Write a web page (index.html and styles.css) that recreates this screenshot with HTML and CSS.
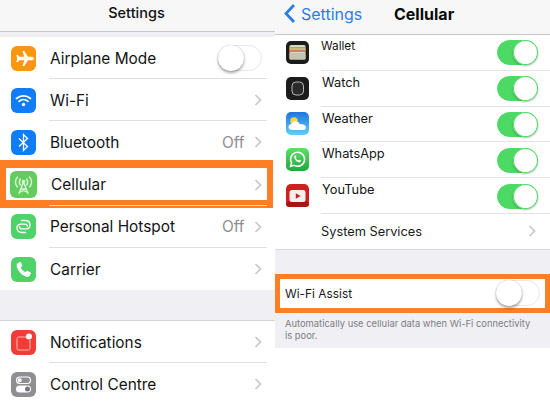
FILE: index.html
```html
<!DOCTYPE html>
<html lang="en">
<head>
<meta charset="utf-8">
<title>Settings</title>
<link rel="stylesheet" href="styles.css">
</head>
<body>
<main class="screens">
  <section class="panel settings">
    <header class="nav nav-left"><h1 class="nav-title">Settings</h1></header>
    <div class="list">
      <div class="row">
        <svg class="icon" viewBox="0 0 25 25"><rect width="25" height="25" rx="6" fill="#fc9512"/><path d="M11.500 5h1.800l3.700 5.700h3.500c1.300 0 2.500.8 2.500 1.800s-1.200 1.800-2.500 1.800H17L13.300 20h-1.800l1.800-5.700H8.500L6.800 16H5.300l.9-3.500-.9-3.500h1.500l1.700 1.700h4.800z" fill="#fff"/></svg>
        <span class="label">Airplane Mode</span>
        <span class="toggle"></span>
      </div>
      <div class="row">
        <svg class="icon" viewBox="0 0 25 25"><rect width="25" height="25" rx="6" fill="#107cf5"/><g fill="none" stroke="#fff" stroke-width="1.700" stroke-linecap="round"><path d="M5.500 10.500c4-3.600 10-3.600 14 0"/><path d="M8 13.300c2.600-2.200 6.400-2.200 9 0"/></g><circle cx="12.500" cy="16.500" r="1.700" fill="#fff"/></svg>
        <span class="label">Wi-Fi</span>
        <svg class="chev" viewBox="0 0 8 12"><path d="M1.500 1l5 5-5 5"/></svg>
      </div>
      <div class="row">
        <svg class="icon" viewBox="0 0 25 25"><rect width="25" height="25" rx="6" fill="#107cf5"/><path d="M8 8.500l8.500 8-4 4V4.500l4 4L8 16.500" fill="none" stroke="#fff" stroke-width="1.300"/></svg>
        <span class="label">Bluetooth</span>
        <span class="value">Off</span>
        <svg class="chev" viewBox="0 0 8 12"><path d="M1.500 1l5 5-5 5"/></svg>
      </div>
      <div class="row row-marked">
        <svg class="icon icon-large" viewBox="0 0 27 27"><rect width="27" height="27" rx="6" fill="#62cd5c"/><g fill="none" stroke="#d9f5d6" stroke-width="1.400" stroke-linecap="round"><path d="M7.500 6c-2.500 3-2.500 7 0 10M10.300 8c-1.300 2-1.300 4 0 6M19.500 6c2.500 3 2.500 7 0 10M16.700 8c1.300 2 1.300 4 0 6"/><path d="M13.500 11L9 22.500M13.500 11L18 22.500M11 18h5M10 21l6-3M17 21l-6-3"/></g><circle cx="13.500" cy="10.500" r="1.700" fill="#e6f9e4"/></svg>
        <span class="label">Cellular</span>
        <svg class="chev" viewBox="0 0 8 12"><path d="M1.500 1l5 5-5 5"/></svg>
        <span class="mark mark-cellular"></span>
      </div>
      <div class="row">
        <svg class="icon" viewBox="0 0 25 25"><rect width="25" height="25" rx="6" fill="#4fd268"/><g fill="none" stroke="#fff" stroke-width="1.300" stroke-linecap="round"><path d="M10.500 6.500h3.500c3 0 5 1.800 5 4.400 0 2.500-1.800 4-4.200 4h-3.600c-1.500 0-2.600-.9-2.600-2.200"/><path d="M14.500 18.500H11c-3 0-5-1.800-5-4.400 0-2.500 1.800-4 4.200-4h3.600c1.500 0 2.600.9 2.600 2.200"/></g></svg>
        <span class="label">Personal Hotspot</span>
        <span class="value">Off</span>
        <svg class="chev" viewBox="0 0 8 12"><path d="M1.500 1l5 5-5 5"/></svg>
      </div>
      <div class="row">
        <svg class="icon" viewBox="0 0 25 25"><rect width="25" height="25" rx="6" fill="#4fd268"/><path d="M6.500 6.200l2.300-1.300c.5-.2.900 0 1.100.4l1.300 3c.2.400 0 .8-.3 1L9.700 10.300c.8 2 2.600 4 4.700 5l1.100-1.300c.3-.3.700-.4 1.100-.2l2.900 1.600c.4.200.5.700.3 1.100L18.500 19c-.7.900-2 1.200-3.300.7C10.500 18 7 14 5.800 9.500c-.3-1.300 0-2.600.7-3.300z" fill="#fff"/></svg>
        <span class="label">Carrier</span>
        <svg class="chev" viewBox="0 0 8 12"><path d="M1.500 1l5 5-5 5"/></svg>
      </div>
    </div>
    <div class="spacer-left"></div>
    <div class="list">
      <div class="row">
        <svg class="icon" viewBox="0 0 25 25"><rect width="25" height="25" rx="6" fill="#f23d37"/><path d="M17 7H7.500C6.700 7 6 7.700 6 8.500v10c0 .8.700 1.500 1.500 1.500h10c.8 0 1.500-.7 1.500-1.500V10" fill="none" stroke="#fbb" stroke-width="1"/><circle cx="18" cy="6.500" r="3" fill="#fff"/></svg>
        <span class="label">Notifications</span>
        <svg class="chev" viewBox="0 0 8 12"><path d="M1.500 1l5 5-5 5"/></svg>
      </div>
      <div class="row">
        <svg class="icon" viewBox="0 0 25 25"><rect width="25" height="25" rx="6" fill="#8e8e93"/><rect x="5.500" y="5" width="14" height="6.500" rx="3.250" fill="none" stroke="#fff" stroke-width="1.200"/><circle cx="8.700" cy="8.200" r="2" fill="#fff"/><rect x="5" y="13.500" width="15" height="7" rx="3.500" fill="#fff"/><circle cx="16.500" cy="17" r="2.500" fill="#77777c"/></svg>
        <span class="label">Control Centre</span>
        <svg class="chev" viewBox="0 0 8 12"><path d="M1.500 1l5 5-5 5"/></svg>
      </div>
    </div>
  </section>

  <section class="panel cellular">
    <header class="nav nav-right">
      <a class="back">
        <svg class="back-chev" viewBox="0 0 13 21"><path d="M11 2L3 10.500 11 19"/></svg>
        <span>Settings</span>
      </a>
      <h2 class="nav-bold">Cellular</h2>
    </header>
    <div class="apps">
      <div class="app">
        <svg class="app-icon" viewBox="0 0 23 23"><rect width="23" height="23" rx="5" fill="#1c1c1c"/><rect x="3.500" y="4" width="16" height="14.500" rx="1.500" fill="#d9d6c4"/><rect x="3.500" y="6" width="16" height="1.600" fill="#8fb26e"/><rect x="3.500" y="7.600" width="16" height="1.600" fill="#e3b75e"/><rect x="3.500" y="9.200" width="16" height="1.600" fill="#d9694f"/><rect x="3.500" y="12" width="16" height="6.500" rx="1" fill="#c6c3b2"/></svg>
        <span class="app-label app-label-small">Wallet</span>
        <span class="toggle toggle-on"></span>
      </div>
      <div class="app">
        <svg class="app-icon" viewBox="0 0 23 23"><rect width="23" height="23" rx="5" fill="#1c1c1c"/><rect x="6" y="5" width="11.500" height="13" rx="4" fill="#2a2a2a" stroke="#b5b5b5" stroke-width="1"/></svg>
        <span class="app-label">Watch</span>
        <span class="toggle toggle-on"></span>
      </div>
      <div class="app">
        <svg class="app-icon" viewBox="0 0 23 23"><defs><linearGradient id="sky" x1="0" y1="0" x2="0" y2="1"><stop offset="0" stop-color="#1d74e0"/><stop offset="1" stop-color="#5fd0f6"/></linearGradient></defs><rect width="23" height="23" rx="5" fill="url(#sky)"/><circle cx="8" cy="9" r="3.700" fill="#f7d548"/><path d="M6 18c-2 0-3.500-1.300-3.500-3s1.400-2.900 3-2.900C6.300 10 8.500 9 10.500 9.500c1.700.4 3 1.500 3.500 3 .7-.4 1.600-.5 2.500-.3 1.800.4 3.500 1.700 3.500 3.200 0 1.700-1.300 2.600-3 2.600z" fill="#fff"/></svg>
        <span class="app-label">Weather</span>
        <span class="toggle toggle-on"></span>
      </div>
      <div class="app">
        <svg class="app-icon" viewBox="0 0 23 23"><defs><linearGradient id="wa" x1="0" y1="0" x2="0" y2="1"><stop offset="0" stop-color="#5fe06d"/><stop offset="1" stop-color="#1fa83a"/></linearGradient></defs><rect width="23" height="23" rx="5" fill="url(#wa)"/><path d="M4.500 18.500l1.100-3.700a7 7 0 1 1 2.700 2.600z" fill="none" stroke="#fff" stroke-width="1.500"/><path d="M9 7.500c-.8.600-1 1.700-.6 2.800.7 1.900 2.300 3.400 4.200 4 1.100.3 2-.1 2.500-1 .2-.4 0-.7-.3-.9l-1.200-.6c-.3-.1-.5 0-.7.200l-.5.6c-1.100-.4-2.100-1.400-2.600-2.500l.5-.6c.1-.2.200-.4 0-.7l-.6-1.200c-.1-.3-.4-.3-.7-.1z" fill="#fff"/></svg>
        <span class="app-label">WhatsApp</span>
        <span class="toggle toggle-on"></span>
      </div>
      <div class="app">
        <svg class="app-icon" viewBox="0 0 23 23"><rect width="23" height="23" rx="5" fill="#cf1f1f"/><rect y="17.500" width="23" height="5.500" rx="3" fill="#a81515"/><rect x="3.500" y="6" width="16" height="12" rx="2.500" fill="#f4eeee"/><path d="M9.800 9.200l4.700 2.800-4.700 2.800z" fill="#c81e1e"/></svg>
        <span class="app-label">YouTube</span>
        <span class="toggle toggle-on"></span>
      </div>
      <div class="services">
        <span class="services-label">System Services</span>
        <svg class="chev" viewBox="0 0 8 12"><path d="M1.500 1l5 5-5 5"/></svg>
      </div>
    </div>
    <div class="spacer-right"></div>
    <div class="assist">
      <span class="assist-label">Wi-Fi Assist</span>
      <span class="toggle"></span>
    </div>
    <p class="note">Automatically use cellular data when Wi-Fi connectivity is poor.</p>
  </section>
</main>
</body>
</html>
```
FILE: styles.css
```css
* { box-sizing: border-box; }
html, body { margin: 0; padding: 0; background: #fff; }
body { font-family: Inter, "Liberation Sans", sans-serif; color: #111; }
.screens { display: flex; width: 550px; height: 406px; overflow: hidden; }
.panel { width: 275px; flex: none; background: #fff; }
.settings { background: #efeff4; }

.nav { background: #f7f7f8; border-bottom: 1px solid #c5c5ca; }
.nav-left { height: 32px; margin-bottom: 5px; display: flex; justify-content: center; align-items: center; padding: 0 2px 7px 0; }
.nav-title { margin: 0; font-size: 14.500px; font-weight: 500; }
.nav-right { height: 35px; display: flex; align-items: center; padding: 0 0 7px 8px; }
.back { display: flex; align-items: center; gap: 5px; color: #2a7de6; font-size: 16px; width: 111px; }
.back-chev { width: 13px; height: 21px; fill: none; stroke: #2a7de6; stroke-width: 2.800; }
.nav-bold { margin: 0; font-size: 16px; font-weight: 700; color: #0a0a0a; }

.list { background: #fff; }
.row { position: relative; height: 42.200px; display: flex; align-items: center; padding: 0 13.500px 0 11px; }
.row::after { content: ""; position: absolute; left: 49px; right: 8px; bottom: 0; height: 1px; background: #dfdfe2; }
.row:last-child::after { display: none; }
.icon { width: 25px; height: 25px; flex: none; margin-right: 14px; }
.icon-large { width: 27px; height: 27px; margin: 0 14px 0 -1px; }
.label { flex: 1; font-size: 15.400px; color: #141414; }
.value { font-size: 15.400px; color: #8e8e93; margin-right: 9px; }
.chev { width: 8px; height: 12px; flex: none; fill: none; stroke: #c7c7cc; stroke-width: 1.700; }
.mark { position: absolute; border: solid #fd7e23; pointer-events: none; }
.mark-cellular { left: 0; top: -3.600px; width: 273px; height: 48px; border-width: 8px 6px; }

.spacer-left { height: 31px; background: #efeff4; border-bottom: 1px solid #d4d4d8; }

.toggle { position: relative; flex: none; width: 44px; height: 26px; border-radius: 13px; background: #fff; border: 1px solid #e8e8ea; }
.toggle::before { content: ""; position: absolute; left: -1px; top: -1px; width: 26px; height: 26px; border-radius: 50%; background: #fff; box-shadow: 0 2px 3px rgba(0,0,0,.35), 0 0 1px rgba(0,0,0,.3); }
.toggle-on { width: 41px; height: 25px; background: #4cd964; border-color: #4cd964; margin-right: 12px; }
.toggle-on::before { left: auto; right: -1px; width: 25px; height: 25px; box-shadow: 0 1px 2px rgba(0,0,0,.3), inset 0 0 0 1px #4cd964; }

.apps { background: #fff; }
.app { position: relative; height: 35.800px; display: flex; align-items: center; padding-left: 11px; }
.app::after { content: ""; position: absolute; left: 46px; right: 0; bottom: 0; height: 1px; background: #e3e3e6; }
.app-icon { width: 23px; height: 23px; flex: none; margin-right: 13px; position: relative; top: -0.500px; }
.app-label { flex: 1; font-size: 12.800px; color: #141414; align-self: flex-start; margin-top: 3px; line-height: 17px; }
.app-label-small { font-size: 11.800px; margin-left: -1px; }
.services { height: 36px; display: flex; align-items: center; justify-content: space-between; padding: 0 14px 0 46px; border-bottom: 1px solid #d9d9dd; }
.services-label { font-size: 12.800px; color: #1a1a1a; }

.spacer-right { height: 24px; background: #efeff4; }
.assist { height: 39px; background: #fff; border: solid #fd7e23; border-width: 5px; display: flex; align-items: center; justify-content: space-between; padding: 0 5px; }
.assist-label { font-size: 11.900px; color: #1a1a1a; }
.note { margin: 0; height: 35px; background: #efeff4; padding: 5px 10px 0 10px; font-size: 9.400px; line-height: 12px; color: #7d7d83; }
```
